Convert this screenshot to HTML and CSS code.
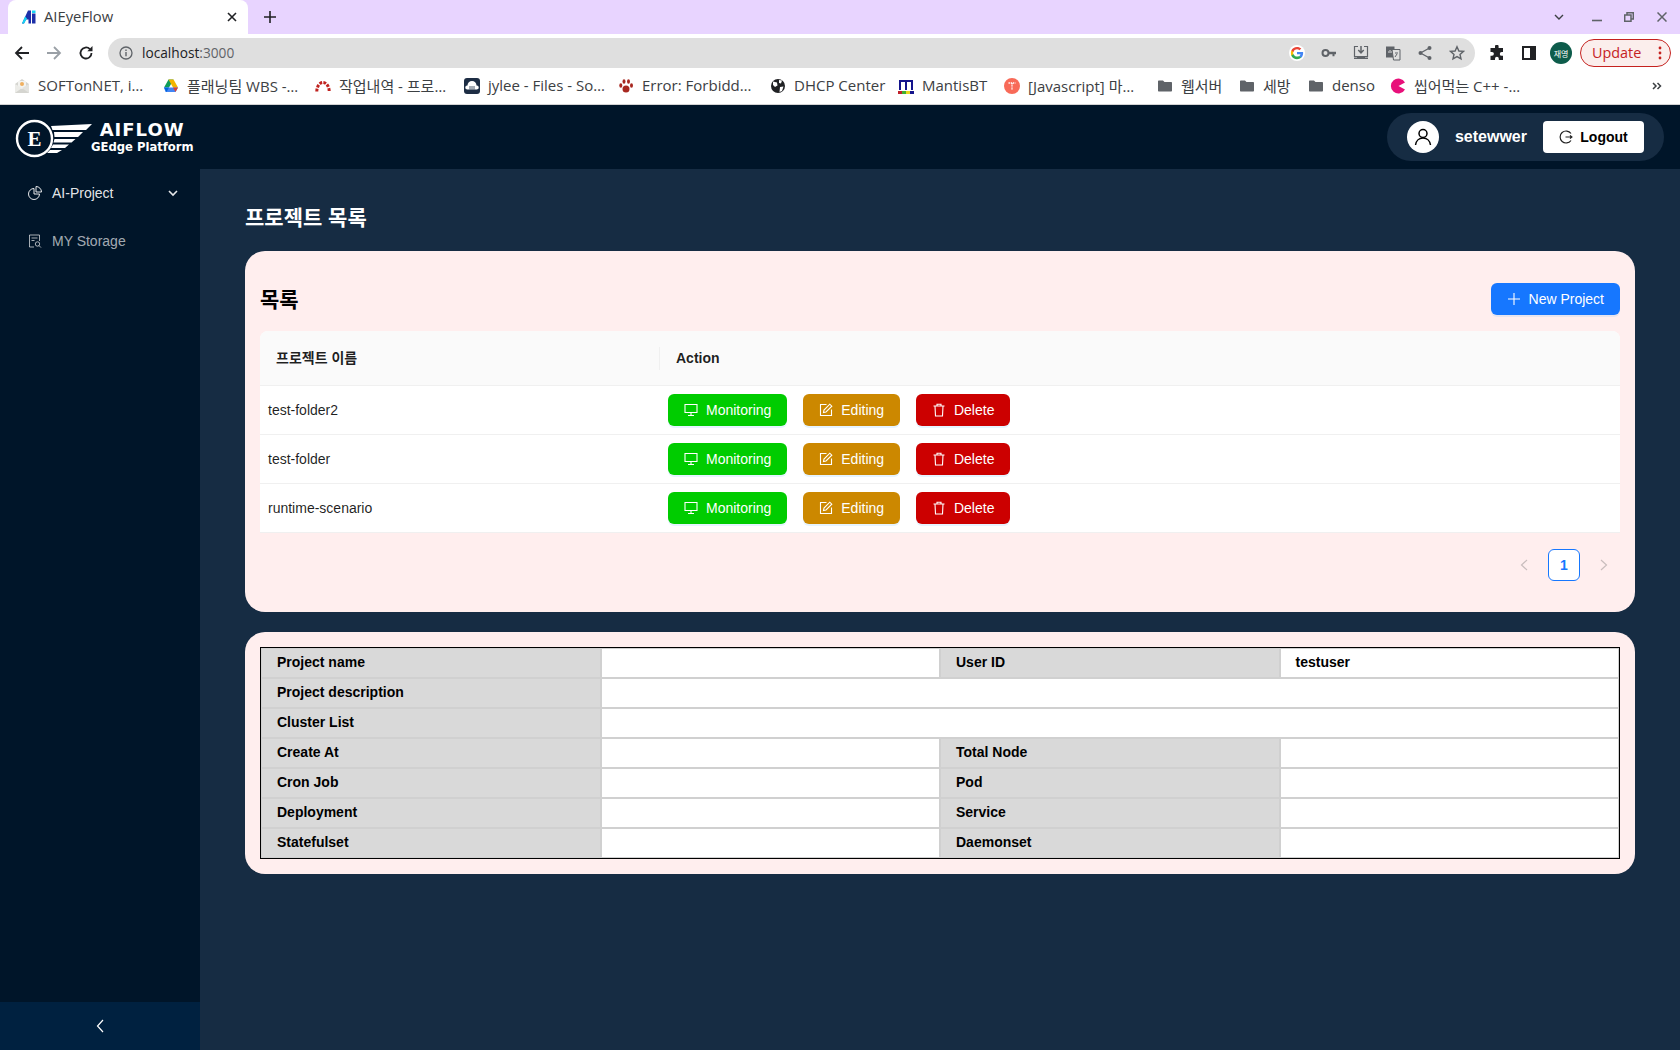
FILE: index.html
```html
<!DOCTYPE html>
<html lang="ko">
<head>
    <meta charset="UTF-8">
    <meta name="viewport" content="width=device-width, initial-scale=1.0">
    <title>AIEyeFlow</title>
    <link rel="stylesheet" href="styles.css">
</head>
<body>
    <svg class="sprite" width="0" height="0">
        <symbol id="i-monitor" viewBox="0 0 14 14"><path d="M1 1.5h12v8H1z M7 9.5v2.5 M4 12.5h6" fill="none" stroke="currentColor" stroke-width="1.1"/></symbol>
        <symbol id="i-edit" viewBox="0 0 14 14"><path d="M7.5 1.5H1.5v11h11V6.5" fill="none" stroke="currentColor" stroke-width="1.1"/><path d="M4.5 9.5l.5-2.5L10.8 1.2l2 2L7 9z" fill="none" stroke="currentColor" stroke-width="1.1"/></symbol>
        <symbol id="i-trash" viewBox="0 0 14 14"><path d="M1.5 3h11 M5 3V1.2h4V3 M3 3l.5 10h7L11 3" fill="none" stroke="currentColor" stroke-width="1.1"/></symbol>
        <symbol id="i-folder" viewBox="0 0 16 16"><path d="M1 3.500c0-.6.4-1 1-1h4l1.500 1.500H14c.6 0 1 .4 1 1v7.500c0 .6-.4 1-1 1H2c-.6 0-1-.4-1-1z" fill="#5f6368"/></symbol>
    </svg>

    <div class="browser">
        <div class="tabstrip">
            <div class="tab">
                <svg class="favicon" viewBox="0 0 14 14" width="14" height="14"><path d="M0 13.500L6 .5h3v13H6.500V9.500H4L2 13.500z" fill="#1c2fa8"/><path d="M0 13.500L3 6.500l2 2-3 5z" fill="#14d4f4"/><path d="M10 3.500h3.500v10H10z" fill="#1c2fa8"/><path d="M10 .5h3.500V3H10z" fill="#14d4f4"/></svg>
                <span class="tab-title">AIEyeFlow</span>
                <svg class="tab-close" viewBox="0 0 10 10" width="10" height="10"><path d="M1 1l8 8M9 1l-8 8" stroke="#202124" stroke-width="1.6"/></svg>
            </div>
            <svg class="tab-new" viewBox="0 0 12 12" width="12" height="12"><path d="M6 0v12M0 6h12" stroke="#202124" stroke-width="1.6"/></svg>
            <div class="win-btns">
                <svg viewBox="0 0 10 6" width="10" height="6" class="win-list"><path d="M1 1l4 4 4-4" fill="none" stroke="#3c4043" stroke-width="1.4"/></svg>
                <svg viewBox="0 0 10 10" width="10" height="10" class="win-min"><path d="M0 8.500h10" stroke="#5f6368" stroke-width="1.6"/></svg>
                <svg viewBox="0 0 10 10" width="10" height="10" class="win-max"><path d="M3 2.500V.7h6.300V7H7.500 M.7 3h6.300v6.300H.7z" fill="none" stroke="#5f6368" stroke-width="1.5"/></svg>
                <svg viewBox="0 0 10 10" width="10" height="10" class="win-close"><path d="M.5.5l9 9M9.500.5l-9 9" stroke="#5f6368" stroke-width="1.5"/></svg>
            </div>
        </div>

        <div class="toolbar">
            <svg class="nav-icon" viewBox="0 0 16 16" width="16" height="16"><path d="M15 8H2 M8 2L2 8l6 6" fill="none" stroke="#202124" stroke-width="1.8"/></svg>
            <svg class="nav-icon" viewBox="0 0 16 16" width="16" height="16"><path d="M1 8h13 M8 2l6 6-6 6" fill="none" stroke="#9aa0a6" stroke-width="1.8"/></svg>
            <svg class="nav-icon" viewBox="0 0 16 16" width="16" height="16"><path d="M13.500 8a5.500 5.500 0 1 1-1.600-3.900" fill="none" stroke="#202124" stroke-width="1.8"/><path d="M14.500 1v5.200H9.300z" fill="#202124"/></svg>
            <div class="omnibox">
                <svg class="omni-info" viewBox="0 0 14 14" width="14" height="14"><circle cx="7" cy="7" r="6" fill="none" stroke="#5f6368" stroke-width="1.3"/><path d="M7 6v4.200M7 3.600v1.300" stroke="#5f6368" stroke-width="1.4"/></svg>
                <span class="url">localhost<span class="url-port">:3000</span></span>
                <div class="omni-icons">
                    <span class="google-dot">
                        <svg viewBox="0 0 16 16" width="14" height="14"><path d="M15 8.200c0-.5 0-1-.1-1.400H8v2.700h4c-.2.9-.7 1.700-1.500 2.200l2.300 1.800C14.200 12.100 15 10.300 15 8.200z" fill="#4285f4"/><path d="M8 15c2 0 3.600-.7 4.800-1.800l-2.300-1.800c-.7.400-1.500.7-2.500.7-1.900 0-3.500-1.300-4.100-3H1.500v1.900C2.700 13.400 5.200 15 8 15z" fill="#34a853"/><path d="M3.900 9.100C3.700 8.600 3.600 8.300 3.600 8s.1-.6.300-1.100V5H1.500C1.200 6 1 7 1 8s.2 2 .5 3z" fill="#fbbc05"/><path d="M8 3.800c1.100 0 2.100.4 2.800 1.100l2.100-2.100C11.600 1.700 10 1 8 1 5.200 1 2.700 2.600 1.500 5l2.400 1.900c.6-1.800 2.200-3.100 4.100-3.100z" fill="#ea4335"/></svg>
                    </span>
                    <svg class="omni-icon" viewBox="0 0 16 16" width="16" height="16"><circle cx="4.500" cy="8" r="3" fill="none" stroke="#5f6368" stroke-width="2"/><path d="M7.500 6.800H15v2.400h-1.500v2h-2v-2H7.500z" fill="#5f6368"/></svg>
                    <svg class="omni-icon" viewBox="0 0 16 16" width="16" height="16"><path d="M5 1.500H1.500v10h13v-10H11" fill="none" stroke="#5f6368" stroke-width="1.200"/><path d="M8 1v6.500 M5.300 5L8 8l2.700-3" fill="none" stroke="#5f6368" stroke-width="1.500"/><path d="M4 11h8v1.500H15V14H1v-1.500h3z" fill="#5f6368"/></svg>
                    <svg class="omni-icon" viewBox="0 0 16 16" width="16" height="16"><path d="M1 1.500h8.500v11H1z" fill="#5f6368"/><path d="M7 4.500h8v10.500H8.500z" fill="#dfdfdf" stroke="#5f6368" stroke-width="1"/><path d="M3 7h4M5 5v1" stroke="#dfdfdf" stroke-width="1"/><path d="M10 8h3M10 12l2-3" stroke="#5f6368" stroke-width="1"/></svg>
                    <svg class="omni-icon" viewBox="0 0 16 16" width="16" height="16"><circle cx="12.500" cy="3" r="2" fill="#5f6368"/><circle cx="3.500" cy="8" r="2" fill="#5f6368"/><circle cx="12.500" cy="13" r="2" fill="#5f6368"/><path d="M12.500 3l-9 5 9 5" fill="none" stroke="#5f6368" stroke-width="1.300"/></svg>
                    <svg class="omni-icon" viewBox="0 0 16 16" width="16" height="16"><path d="M8 1.800l1.900 4.200 4.600.4-3.500 3 1 4.500L8 11.600l-4 2.300 1-4.500-3.500-3 4.600-.4z" fill="none" stroke="#5f6368" stroke-width="1.400"/></svg>
                </div>
            </div>
            <svg class="ext-icon" viewBox="0 0 16 16" width="16" height="16"><path d="M6 1.500a1.800 1.800 0 0 1 3.600 0V3H14v4h-1.300a1.900 1.900 0 0 0 0 3.800H14V15H9.800v-1.300a1.900 1.900 0 0 0-3.800 0V15H1.500v-4.300H3a1.900 1.900 0 0 0 0-3.800H1.500V3H6z" fill="#202124"/></svg>
            <svg class="ext-icon" viewBox="0 0 14 14" width="14" height="14"><path d="M1 1h12v12H1z" fill="none" stroke="#202124" stroke-width="2"/><path d="M8 1h5v12H8z" fill="#202124"/></svg>
            <span class="profile">재영</span>
            <span class="update"><span class="update-label">Update</span><svg viewBox="0 0 4 14" width="4" height="14"><circle cx="2" cy="2" r="1.400" fill="#c5221f"/><circle cx="2" cy="7" r="1.400" fill="#c5221f"/><circle cx="2" cy="12" r="1.400" fill="#c5221f"/></svg></span>
        </div>

        <div class="bookmarks">
            <span class="bm bm-soft"><svg viewBox="0 0 16 16" width="16" height="16"><path d="M1 6l7-5 7 5v9H1z" fill="#d5d5d0"/><path d="M4 3h8v6l-4 2-4-2z" fill="#f3f3f0"/><circle cx="8" cy="6" r="2" fill="#f0b060"/><path d="M1 6v9l7-5z" fill="#ecece8"/><path d="M15 6v9l-7-5z" fill="#e3e3df"/></svg><span class="bm-text">SOFTonNET, i…</span></span>
            <span class="bm bm-drive"><svg viewBox="0 0 16 16" width="16" height="16"><path d="M5.500 1.500h5L6 9.500H1z" fill="#0f9d58"/><path d="M5.500 1.500h5L15 9.500h-5z" fill="#f4b400"/><path d="M1 9.500h14l-2.500 4.500h-10z" fill="#4285f4"/><path d="M1 9.500h5L3.500 14z" fill="#0066da"/><path d="M15 9.500h-5l2.500 4.500z" fill="#db4437"/></svg><span class="bm-text">플래닝팀 WBS -…</span></span>
            <span class="bm bm-work"><svg viewBox="0 0 16 16" width="16" height="16"><path d="M1.800 13.500a6.200 9 0 0 1 12.400 0" fill="none" stroke="#c0221f" stroke-width="3" stroke-dasharray="2.800 1.300"/></svg><span class="bm-text">작업내역 - 프로…</span></span>
            <span class="bm bm-cloud"><svg viewBox="0 0 16 16" width="16" height="16"><rect x="0" y="0" width="16" height="16" rx="3" fill="#1d2d44"/><path d="M3 11.500a2 2 0 0 1 .5-4 4.500 4.500 0 0 1 9 0 2 2 0 0 1 .5 4z" fill="#fff"/><path d="M6 8v3.500M8 8v3.500M10 8v3.500" stroke="#1d2d44" stroke-width=".8"/></svg><span class="bm-text">jylee - Files - So…</span></span>
            <span class="bm bm-error"><svg viewBox="0 0 16 16" width="16" height="16"><ellipse cx="8" cy="11" rx="3.500" ry="3.500" fill="#a82820"/><ellipse cx="2.800" cy="7.500" rx="1.500" ry="2.200" fill="#a82820"/><ellipse cx="6" cy="3.500" rx="1.500" ry="2.300" fill="#a82820"/><ellipse cx="10.500" cy="3.500" rx="1.500" ry="2.300" fill="#a82820"/><ellipse cx="13.500" cy="7.500" rx="1.500" ry="2.200" fill="#a82820"/></svg><span class="bm-text">Error: Forbidd…</span></span>
            <span class="bm bm-dhcp"><svg viewBox="0 0 16 16" width="16" height="16"><circle cx="8" cy="8" r="7" fill="#202124"/><path d="M3 3.500l4 1 .5 3L5 9 3 7zM9 2l3 .5-1 3-2-.5zM10 9l3.500-.5L12 13l-2.500 1z" fill="#fff"/></svg><span class="bm-text">DHCP Center</span></span>
            <span class="bm bm-mantis"><svg viewBox="0 0 16 16" width="16" height="16"><path d="M2 12V3h12v9 M8 3v9" fill="none" stroke="#14148c" stroke-width="2"/><path d="M0 13h4v3H0z" fill="#c0202a"/><path d="M4 13h4v3H4z" fill="#40b030"/><path d="M8 13h4v3H8z" fill="#e8d820"/><path d="M12 13h4v3h-4z" fill="#14148c"/></svg><span class="bm-text">MantisBT</span></span>
            <span class="bm bm-js"><svg viewBox="0 0 16 16" width="16" height="16"><circle cx="8" cy="8" r="8" fill="#f86a58"/><path d="M4.500 5h7M8 5v7" stroke="#fff" stroke-width="1.400" stroke-dasharray="1.400 .8"/></svg><span class="bm-text">[Javascript] 마…</span></span>
            <span class="bm bm-web"><svg width="16" height="16"><use href="#i-folder"/></svg><span class="bm-text">웹서버</span></span>
            <span class="bm bm-sebang"><svg width="16" height="16"><use href="#i-folder"/></svg><span class="bm-text">세방</span></span>
            <span class="bm bm-denso"><svg width="16" height="16"><use href="#i-folder"/></svg><span class="bm-text">denso</span></span>
            <span class="bm bm-cpp"><svg viewBox="0 0 16 16" width="16" height="16"><path d="M15 4.500A7.500 7.500 0 1 0 15 11.500L8.500 8z" fill="#e8107a"/></svg><span class="bm-text">씹어먹는 C++ -…</span></span>
            <svg class="bm-more" viewBox="0 0 10 8" width="10" height="8"><path d="M1 1l3 3-3 3M5.500 1l3 3-3 3" fill="none" stroke="#3c4043" stroke-width="1.500"/></svg>
        </div>
    </div>

    <div class="app">
        <header class="app-header">
            <div class="logo">
                <svg class="logo-mark" viewBox="0 0 80 42" width="80" height="42">
                    <circle cx="20.500" cy="21.500" r="17.500" fill="#001529" stroke="#fff" stroke-width="2.400"/>
                    <text x="20.500" y="28.500" class="logo-e">E</text>
                    <path d="M37 9L78 7l-6 6H38.500z M40 15h29l-5 5H40.500z M40.500 22h21l-4 3.500H39.500z M39 27.500h16l-4 3.500H37z M36 33h12l-5 3H33z" fill="#fff"/>
                </svg>
                <div class="logo-text">
                    <div class="logo-name">AIFLOW</div>
                    <div class="logo-sub">GEdge Platform</div>
                </div>
            </div>
            <div class="user-box">
                <span class="avatar"><svg viewBox="0 0 18 18" width="18" height="18"><circle cx="9" cy="5.500" r="4" fill="none" stroke="#000" stroke-width="1.500"/><path d="M1.500 17c.5-4 3.500-7 7.500-7s7 3 7.500 7" fill="none" stroke="#000" stroke-width="1.500"/></svg></span>
                <span class="user-name">setewwer</span>
                <button class="logout"><svg viewBox="0 0 14 14" width="14" height="14"><path d="M12 3.500A6 6 0 1 0 12 10.500" fill="none" stroke="#222" stroke-width="1.200"/><path d="M6.500 7H13M11 5.300L13 7l-2 1.700" fill="none" stroke="#222" stroke-width="1.100"/></svg>Logout</button>
            </div>
        </header>

        <div class="app-body">
            <aside class="sider">
                <nav class="menu">
                    <a class="menu-item active">
                        <svg viewBox="0 0 14 14" width="14" height="14"><path d="M6 2.500a5.500 5.500 0 1 0 5.500 5.500H6z" fill="none" stroke="currentColor" stroke-width="1"/><path d="M8 .5a5.500 5.500 0 0 1 5.500 5.500H8z" fill="none" stroke="currentColor" stroke-width="1"/></svg>
                        <span>AI-Project</span>
                        <svg class="menu-arrow" viewBox="0 0 10 7" width="10" height="7"><path d="M1 1l4 4 4-4" fill="none" stroke="currentColor" stroke-width="1.600"/></svg>
                    </a>
                    <a class="menu-item">
                        <svg viewBox="0 0 14 14" width="14" height="14"><path d="M6 13H1.500V1h10v6" fill="none" stroke="currentColor" stroke-width="1"/><path d="M3.500 4h6M3.500 6.500h3" stroke="currentColor" stroke-width="1"/><circle cx="9.500" cy="10" r="2.200" fill="none" stroke="currentColor" stroke-width="1"/><path d="M11 11.600l2 2" stroke="currentColor" stroke-width="1"/></svg>
                        <span>MY Storage</span>
                    </a>
                </nav>
                <div class="sider-trigger"><svg viewBox="0 0 8 14" width="8" height="14"><path d="M7 1L1.500 7 7 13" fill="none" stroke="#fff" stroke-width="1.200"/></svg></div>
            </aside>

            <main class="content">
                <h1 class="page-title">프로젝트 목록</h1>

                <section class="card card-list">
                    <div class="card-head">
                        <h2>목록</h2>
                        <button class="btn btn-primary"><svg viewBox="0 0 14 14" width="14" height="14"><path d="M7 1v12M1 7h12" stroke="currentColor" stroke-width="1.100"/></svg>New Project</button>
                    </div>

                    <table class="project-table">
                        <thead>
                            <tr>
                                <th class="col-name"><span>프로젝트 이름</span></th>
                                <th class="col-action"><span>Action</span></th>
                            </tr>
                        </thead>
                        <tbody>
                            <tr>
                                <td>test-folder2</td>
                                <td class="actions">
                                    <button class="btn btn-green"><svg width="14" height="14"><use href="#i-monitor"/></svg>Monitoring</button>
                                    <button class="btn btn-orange"><svg width="14" height="14"><use href="#i-edit"/></svg>Editing</button>
                                    <button class="btn btn-red"><svg width="14" height="14"><use href="#i-trash"/></svg>Delete</button>
                                </td>
                            </tr>
                            <tr>
                                <td>test-folder</td>
                                <td class="actions">
                                    <button class="btn btn-green"><svg width="14" height="14"><use href="#i-monitor"/></svg>Monitoring</button>
                                    <button class="btn btn-orange"><svg width="14" height="14"><use href="#i-edit"/></svg>Editing</button>
                                    <button class="btn btn-red"><svg width="14" height="14"><use href="#i-trash"/></svg>Delete</button>
                                </td>
                            </tr>
                            <tr>
                                <td>runtime-scenario</td>
                                <td class="actions">
                                    <button class="btn btn-green"><svg width="14" height="14"><use href="#i-monitor"/></svg>Monitoring</button>
                                    <button class="btn btn-orange"><svg width="14" height="14"><use href="#i-edit"/></svg>Editing</button>
                                    <button class="btn btn-red"><svg width="14" height="14"><use href="#i-trash"/></svg>Delete</button>
                                </td>
                            </tr>
                        </tbody>
                    </table>

                    <div class="pagination">
                        <span class="page-arrow"><svg viewBox="0 0 8 12" width="8" height="12"><path d="M7 1L1.500 6 7 11" fill="none" stroke="#c9bdbd" stroke-width="1.200"/></svg></span>
                        <span class="page-num">1</span>
                        <span class="page-arrow"><svg viewBox="0 0 8 12" width="8" height="12"><path d="M1 1l5.500 5L1 11" fill="none" stroke="#c9bdbd" stroke-width="1.200"/></svg></span>
                    </div>
                </section>

                <section class="card card-detail">
                    <table class="detail-table">
                        <tr><th>Project name</th><td></td><th>User ID</th><td>testuser</td></tr>
                        <tr><th>Project description</th><td colspan="3"></td></tr>
                        <tr><th>Cluster List</th><td colspan="3"></td></tr>
                        <tr><th>Create At</th><td></td><th>Total Node</th><td></td></tr>
                        <tr><th>Cron Job</th><td></td><th>Pod</th><td></td></tr>
                        <tr><th>Deployment</th><td></td><th>Service</th><td></td></tr>
                        <tr><th>Statefulset</th><td></td><th>Daemonset</th><td></td></tr>
                    </table>
                </section>
            </main>
        </div>
    </div>
</body>
</html>
```

FILE: styles.css
```css
* {
    box-sizing: border-box;
}
html, body {
    margin: 0;
    padding: 0;
    height: 100%;
    overflow: hidden;
}
body {
    display: flex;
    flex-direction: column;
    font-family: "Liberation Sans", "Noto Sans CJK KR", sans-serif;
    font-size: 14px;
    background-color: #162c43;
}
svg {
    display: block;
    flex: none;
}
.sprite {
    position: absolute;
}

/* browser chrome */
.browser {
    flex: none;
    font-family: "Open Sans", "Noto Sans CJK KR", sans-serif;
    background-color: #fff;
    border-bottom: 1px solid #d3d3d3;
}
.tabstrip {
    display: flex;
    align-items: center;
    height: 34px;
    padding-left: 8px;
    background-color: #e8d4ff;
}
.tab {
    display: flex;
    align-items: center;
    align-self: flex-end;
    width: 240px;
    height: 34px;
    padding: 0 11px 0 14px;
    background-color: #fff;
    border-radius: 8px 8px 0 0;
}
.favicon {
    margin-right: 8px;
}
.tab-title {
    flex: 1;
    margin-top: -2px;
    font-size: 14.8px;
    color: #3c4043;
}
.tab-new {
    margin-left: 16px;
}
.win-btns {
    display: flex;
    align-items: center;
    margin-left: auto;
    padding-right: 13px;
}
.win-list {
    margin-right: 28px;
}
.win-min {
    margin-right: 22px;
}
.win-max {
    margin-right: 23px;
}

.toolbar {
    display: flex;
    align-items: center;
    height: 34px;
    padding-top: 4px;
    padding-left: 14px;
}
.nav-icon {
    margin-right: 16px;
}
.omnibox {
    display: flex;
    align-items: center;
    width: 1367px;
    height: 30px;
    margin-left: -2px;
    padding-left: 11px;
    background-color: #dfdfdf;
    border-radius: 15px;
}
.url {
    margin-top: -2px;
    margin-left: 9px;
    font-size: 13.7px;
    color: #202124;
}
.url-port {
    color: #5f6368;
}
.omni-icons {
    display: flex;
    align-items: center;
    gap: 16px;
    margin-left: auto;
    padding-right: 10px;
}
.google-dot {
    display: flex;
    align-items: center;
    justify-content: center;
    width: 16px;
    height: 16px;
    background-color: #fff;
    border-radius: 50%;
}
.ext-icon {
    margin-left: 14px;
}
.ext-icon + .ext-icon {
    margin-left: 17px;
}
.profile {
    display: flex;
    align-items: center;
    justify-content: center;
    width: 22px;
    height: 22px;
    margin-left: 14px;
    background-color: #0d5c4b;
    border-radius: 50%;
    color: #fff;
    font-size: 8px;
}
.update {
    display: flex;
    align-items: center;
    justify-content: space-between;
    width: 91px;
    height: 28px;
    margin-left: 8px;
    padding: 0 8px 0 11px;
    background-color: #fbeeec;
    border: 1px solid #c5221f;
    border-radius: 14px;
    color: #c5221f;
    font-size: 14.4px;
}
.update-label {
    margin-top: -2px;
}

.bookmarks {
    display: flex;
    align-items: center;
    height: 36px;
    padding-left: 14px;
    font-size: 15px;
    color: #3c4043;
}
.bm {
    display: flex;
    align-items: center;
    gap: 8px;
    white-space: nowrap;
}
.bm-text {
    margin-top: -2px;
}
.bm-soft { width: 149px; }
.bm-drive { width: 152px; }
.bm-work { width: 149px; }
.bm-cloud { width: 154px; }
.bm-error { width: 152px; }
.bm-dhcp { width: 128px; }
.bm-mantis { width: 106px; }
.bm-js { width: 153px; }
.bm-web { width: 82px; }
.bm-sebang { width: 69px; }
.bm-denso { width: 82px; }
.bm-cpp { width: 262px; }

/* app header */
.app {
    flex: 1;
    display: flex;
    flex-direction: column;
    min-height: 0;
}
.app-header {
    flex: none;
    display: flex;
    align-items: center;
    justify-content: space-between;
    height: 64px;
    padding: 0 16px 0 14px;
    background-color: #001529;
}
.logo {
    display: flex;
    align-items: center;
}
.logo-mark {
    margin-top: 2px;
}
.logo-e {
    font-family: "Liberation Serif", serif;
    font-size: 21px;
    font-weight: bold;
    fill: #fff;
    text-anchor: middle;
}
.logo-text {
    margin-left: -3px;
    color: #fff;
    font-family: "DejaVu Sans", sans-serif;
    font-weight: bold;
    text-align: right;
}
.logo-name {
    font-size: 18px;
    line-height: 20px;
    letter-spacing: 1px;
    padding-right: 9px;
}
.logo-sub {
    font-size: 11.6px;
    line-height: 14px;
}
.user-box {
    display: flex;
    align-items: center;
    height: 48px;
    padding: 0 20px;
    background-color: #162c43;
    border-radius: 24px;
}
.avatar {
    display: flex;
    align-items: center;
    justify-content: center;
    width: 32px;
    height: 32px;
    background-color: #fff;
    border-radius: 50%;
}
.user-name {
    margin: 0 16px;
    color: #fff;
    font-size: 16px;
    font-weight: bold;
}
.logout {
    display: flex;
    align-items: center;
    justify-content: center;
    gap: 7px;
    width: 101px;
    height: 32px;
    padding: 0;
    background-color: #fff;
    border: none;
    border-radius: 4px;
    color: #000;
    font-family: inherit;
    font-size: 14px;
    font-weight: bold;
}

/* sidebar */
.app-body {
    flex: 1;
    display: flex;
    min-height: 0;
}
.sider {
    flex: none;
    display: flex;
    flex-direction: column;
    width: 200px;
    background-color: #001529;
}
.menu {
    flex: 1;
    padding-top: 4px;
}
.menu-item {
    display: flex;
    align-items: center;
    gap: 10px;
    height: 40px;
    margin-bottom: 8px;
    padding: 0 22px 0 28px;
    color: rgba(255, 255, 255, 0.65);
}
.menu-item.active {
    color: rgba(255, 255, 255, 0.9);
}
.menu-arrow {
    margin-left: auto;
}
.sider-trigger {
    display: flex;
    align-items: center;
    justify-content: center;
    height: 48px;
    background-color: #002140;
}

/* content */
.content {
    flex: 1;
    padding: 34px 45px 0;
}
.page-title {
    margin: 0 0 18px;
    color: #fff;
    font-size: 21px;
    font-weight: bold;
    line-height: 30px;
}
.card {
    background-color: #ffeeee;
    border-radius: 20px;
}
.card-list {
    padding: 32px 15px 15px;
}
.card-detail {
    margin-top: 20px;
    padding: 15px;
}
.card-head {
    display: flex;
    align-items: center;
    justify-content: space-between;
    margin-bottom: 16px;
}
.card-head h2 {
    margin: -1px 0 1px;
    color: #000;
    font-size: 21px;
    font-weight: bold;
}

.btn {
    display: inline-flex;
    align-items: center;
    gap: 8px;
    height: 32px;
    padding: 0 16px;
    border: none;
    border-radius: 6px;
    color: #fff;
    font-family: inherit;
    font-size: 14px;
}
.btn-primary {
    background-color: #1677ff;
    box-shadow: 0 2px 0 rgba(5, 145, 255, 0.1);
}
.btn-green {
    background-color: #00cc00;
    box-shadow: 0 2px 0 rgba(5, 145, 255, 0.1);
}
.btn-orange {
    background-color: #cc8800;
    box-shadow: 0 2px 0 rgba(5, 145, 255, 0.1);
}
.btn-red {
    background-color: #cc0000;
    box-shadow: 0 2px 0 rgba(5, 145, 255, 0.1);
}

.project-table {
    width: 100%;
    border-collapse: separate;
    border-spacing: 0;
    background-color: #fff;
    border-radius: 8px 8px 0 0;
}
.project-table th {
    height: 55px;
    background-color: #fafafa;
    border-bottom: 1px solid #f0f0f0;
    color: rgba(0, 0, 0, 0.88);
    font-weight: bold;
    text-align: left;
}
.project-table th.col-name {
    width: 400px;
    padding-left: 16px;
    border-top-left-radius: 8px;
}
.col-name span {
    display: block;
    margin-top: -2px;
}
.project-table th.col-action {
    padding: 0;
    border-top-right-radius: 8px;
}
.col-action span {
    display: block;
    margin-left: -1px;
    padding-left: 16px;
    line-height: 23px;
    border-left: 1px solid #f0f0f0;
}
.project-table td {
    height: 49px;
    padding: 8px;
    border-bottom: 1px solid #f0f0f0;
    color: rgba(0, 0, 0, 0.88);
}
.actions .btn {
    margin-right: 12px;
}

.pagination {
    display: flex;
    justify-content: flex-end;
    align-items: center;
    gap: 8px;
    margin: 16px 0;
}
.page-arrow {
    display: flex;
    align-items: center;
    justify-content: center;
    width: 32px;
    height: 32px;
}
.page-num {
    width: 32px;
    height: 32px;
    background-color: #fff;
    border: 1px solid #1677ff;
    border-radius: 6px;
    color: #1677ff;
    font-weight: bold;
    line-height: 30px;
    text-align: center;
}

.detail-table {
    width: 100%;
    table-layout: fixed;
    border-collapse: collapse;
    outline: 1px solid #000;
    outline-offset: -1px;
}
.detail-table th, .detail-table td {
    height: 30px;
    padding: 0 15px 2px;
    border: 2px solid #d0d0d0;
    color: #000;
    font-weight: bold;
    text-align: left;
}
.detail-table th {
    background-color: #d9d9d9;
}
.detail-table td {
    background-color: #fff;
}
```
